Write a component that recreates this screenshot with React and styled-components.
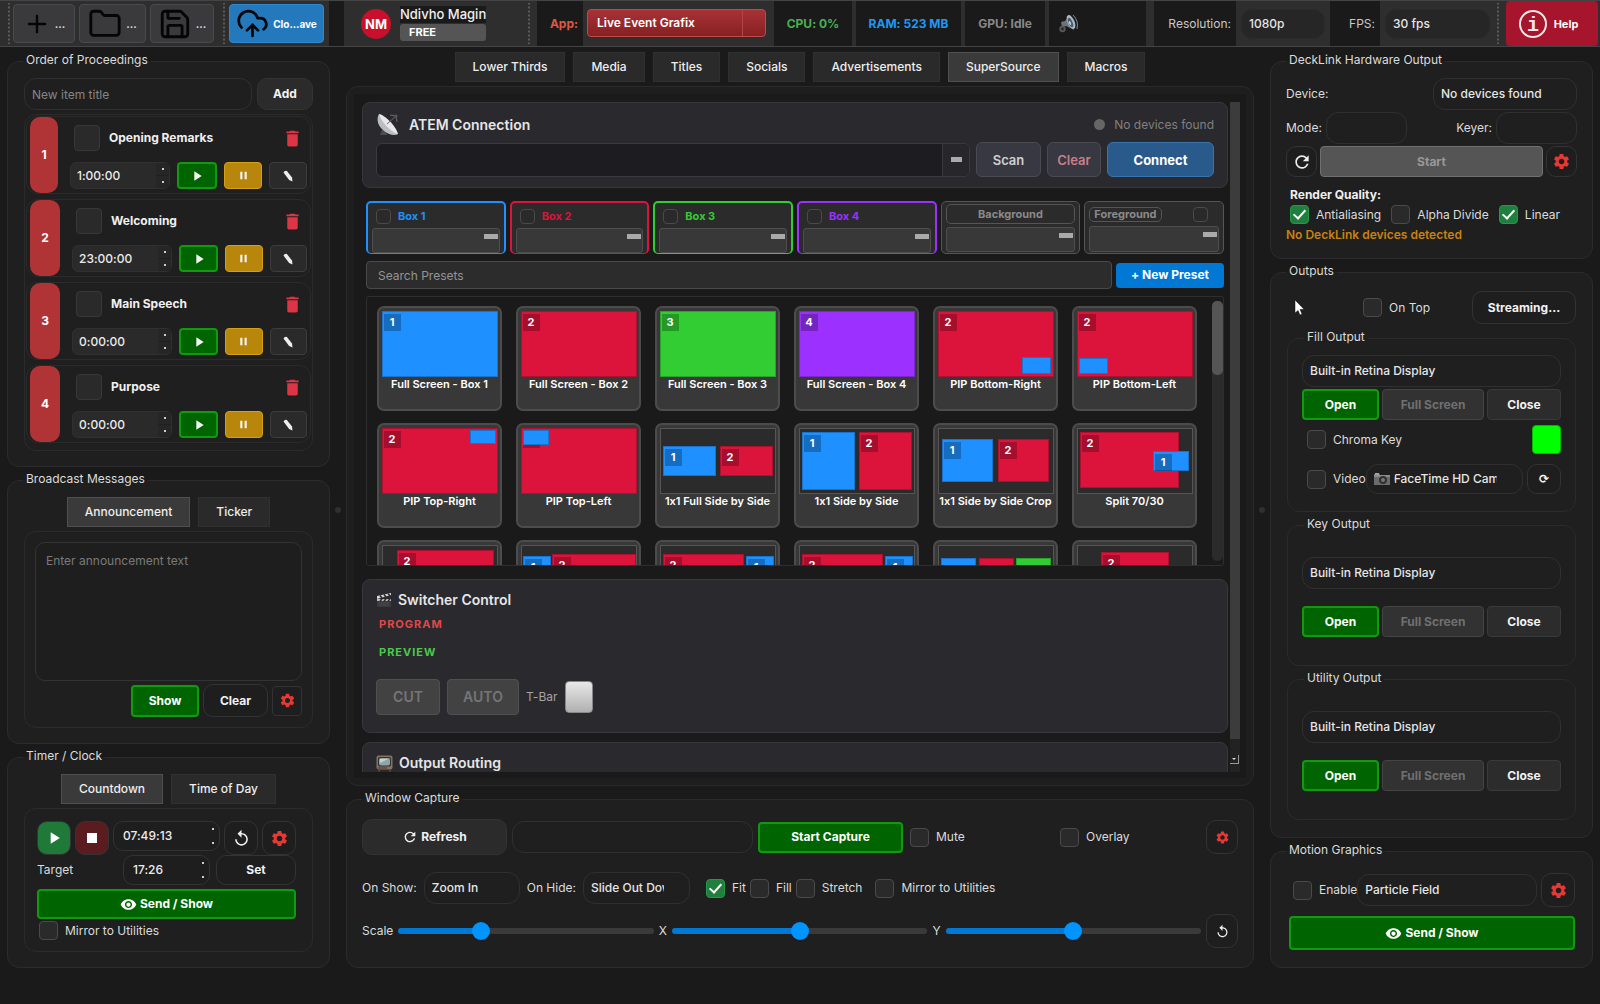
import React, { useState } from 'react';
import styled, { createGlobalStyle, css } from 'styled-components';
import { CloudUpload, Folder, Plus, Save } from 'lucide-react';
import {
    MdDelete,
    MdPause,
    MdPlayArrow,
    MdRefresh,
    MdReplay,
    MdSettings,
    MdStop,
    MdVisibility,
} from 'react-icons/md';

const BLUE = '#1e90ff';
const RED = '#dc143c';
const GREEN = '#32cd32';
const PURPLE = '#9b30ff';

const agenda = [
    { title: 'Opening Remarks', time: '1:00:00', badge: 28 },
    { title: 'Welcoming', time: '23:00:00', badge: 30 },
    { title: 'Main Speech', time: '0:00:00', badge: 30 },
    { title: 'Purpose', time: '0:00:00', badge: 30 },
];

const mainTabs = ['Lower Thirds', 'Media', 'Titles', 'Socials', 'Advertisements', 'SuperSource', 'Macros'];

const sourceBoxes = [
    { name: 'Box 1', color: BLUE },
    { name: 'Box 2', color: RED },
    { name: 'Box 3', color: GREEN },
    { name: 'Box 4', color: PURPLE },
];

// boxes: [number, colour, x, y, width, height] on a 116 x 66 canvas
const presets = [
    { name: 'Full Screen - Box 1', boxes: [[1, BLUE, 0, 0, 116, 66]] },
    { name: 'Full Screen - Box 2', boxes: [[2, RED, 0, 0, 116, 66]] },
    { name: 'Full Screen - Box 3', boxes: [[3, GREEN, 0, 0, 116, 66]] },
    { name: 'Full Screen - Box 4', boxes: [[4, PURPLE, 0, 0, 116, 66]] },
    { name: 'PIP Bottom-Right', boxes: [[2, RED, 0, 0, 116, 66], [0, BLUE, 84, 46, 29, 17]] },
    { name: 'PIP Bottom-Left', boxes: [[2, RED, 0, 0, 116, 66], [0, BLUE, 2, 47, 29, 16]] },
    { name: 'PIP Top-Right', boxes: [[2, RED, 0, 0, 116, 66], [0, BLUE, 88, 2, 26, 14]] },
    { name: 'PIP Top-Left', boxes: [[2, RED, 0, 0, 116, 66], [0, BLUE, 2, 2, 26, 15]] },
    { name: '1x1 Full Side by Side', boxes: [[1, BLUE, 3, 18, 53, 30], [2, RED, 60, 18, 53, 30]] },
    { name: '1x1 Side by Side', boxes: [[1, BLUE, 3, 4, 53, 58], [2, RED, 60, 4, 53, 58]] },
    { name: '1x1 Side by Side Crop', boxes: [[1, BLUE, 4, 11, 51, 43], [2, RED, 60, 11, 51, 43]] },
    { name: 'Split 70/30', boxes: [[2, RED, 3, 4, 99, 56], [1, BLUE, 76, 23, 36, 20]] },
    { boxes: [[2, RED, 15, 5, 97, 56]] },
    { boxes: [[1, BLUE, 2, 11, 28, 40], [2, RED, 31, 9, 84, 46]] },
    { boxes: [[2, RED, 3, 9, 81, 46], [1, BLUE, 86, 11, 28, 40]] },
    { boxes: [[2, RED, 3, 9, 81, 46], [1, BLUE, 86, 11, 28, 40]] },
    { boxes: [[0, BLUE, 3, 13, 35, 40], [0, RED, 41, 13, 35, 40], [0, GREEN, 78, 13, 35, 40]] },
    { boxes: [[2, RED, 24, 7, 68, 38], [0, BLUE, 1, 20, 22, 30]] },
];

const DishIcon = () => (
    <svg width="24" height="24" viewBox="0 0 24 24" aria-hidden="true">
        <path d="M4 22h7l-2-6-3 1z" fill="#4c4c50" />
        <path d="M3 1c-3 5-1 12 4 16 5 5 12 6 15 4z" fill="#b9bcc0" />
        <path d="M3 1c6 1 17 12 19 20C16 20 5 9 3 1z" fill="#e6e8ea" />
        <path d="M11 11l9-8M20 3l-6-1M20 3l1 6" stroke="#6c6c70" strokeWidth="1" fill="none" />
        <circle cx="20" cy="3" r="1.6" fill="#55555a" />
    </svg>
);

const ClapperIcon = () => (
    <svg width="16" height="16" viewBox="0 0 16 16" aria-hidden="true">
        <path d="M1 7h14v8H1z" fill="#3a3a3c" />
        <path d="M1 4l14-3v2L1 7z" fill="#d8d8d8" />
        <path d="M4 3.500l2 2.500M8 2.500l2 2.500M12 1.700l2 2" stroke="#2a2a2c" strokeWidth="1.600" />
        <path d="M1 7h14v2H1z" fill="#bdbdbd" />
        <path d="M4 9l2-2M8 9l2-2M12 9l2-2" stroke="#2a2a2c" strokeWidth="1.600" />
        <path d="M3 11h10M3 13h10" stroke="#58585a" strokeWidth="0.600" />
    </svg>
);

const TvIcon = () => (
    <svg width="17" height="17" viewBox="0 0 17 17" aria-hidden="true">
        <rect x="0.500" y="0.500" width="16" height="14" rx="2" fill="#8a6f5e" />
        <rect x="2" y="2" width="13" height="9.500" rx="2" fill="#2c3436" />
        <rect x="3" y="3" width="11" height="7.500" rx="2" fill="#8fa5a6" />
        <path d="M4 4h8l-8 4z" fill="#c3d2d2" />
        <path d="M2 13h9" stroke="#4d3c32" />
        <path d="M2 15h2v1.500H2zM13 15h2v1.500h-2z" fill="#5a473b" />
    </svg>
);

const SpeakerIcon = () => (
    <svg width="20" height="20" viewBox="0 0 20 20" aria-hidden="true">
        <path d="M3 8l4-1 5-6 4 15-8-4-4 1z" fill="#6f7478" />
        <ellipse cx="13" cy="8" rx="3.500" ry="7.500" transform="rotate(-24 13 8)" fill="#aeb9c0" />
        <ellipse cx="12.500" cy="8.500" rx="2" ry="5" transform="rotate(-24 12.500 8.500)" fill="#3f6075" />
        <ellipse cx="12" cy="9" rx="0.900" ry="2" transform="rotate(-24 12 9)" fill="#cfd8dc" />
        <circle cx="4.500" cy="15" r="3.200" fill="#55585c" />
        <circle cx="4.500" cy="15" r="1.400" fill="#2a2a2c" />
        <path d="M15 1q6 6 4 14" stroke="#7f8e97" fill="none" />
    </svg>
);

const CameraIcon = () => (
    <svg width="16" height="12" viewBox="0 0 16 12" aria-hidden="true">
        <path d="M0 1h6v1h10v10H0z" fill="#6b6b6b" />
        <path d="M1 0h4v2H1z" fill="#a3a3a3" />
        <path d="M0 2h16v2H0z" fill="#8d8d8d" />
        <circle cx="9" cy="7" r="4" fill="#303030" />
        <circle cx="9" cy="7" r="2" fill="#777" />
    </svg>
);

const PencilIcon = () => (
    <svg width="12" height="12" viewBox="0 0 12 12" aria-hidden="true">
        <path d="M1.500 2.400Q2.600.4 4.900 1l5.100 6.600.5 3.800-3.400-1.400z" fill="#eee" />
    </svg>
);

const InfoIcon = () => (
    <svg width="30" height="30" viewBox="0 0 30 30" aria-hidden="true">
        <circle cx="15" cy="15" r="13" fill="none" stroke="#f2e6e8" strokeWidth="2" />
        <text x="15" y="22" textAnchor="middle" fontFamily="Liberation Mono, monospace" fontSize="20" fill="#f2e6e8">i</text>
    </svg>
);

const CursorIcon = () => (
    <svg width="10" height="16" viewBox="0 0 10 16" aria-hidden="true">
        <path d="M1 0v13l3-2.500L6 15l2-1-2-4.500 4-.3z" fill="#fff" stroke="#111" strokeWidth="0.500" />
    </svg>
);

const Preview = ({ boxes }) => (
    <PreviewSvg viewBox="0 0 116 66" aria-hidden="true">
        <rect x="0.5" y="0.5" width="115" height="65" fill="#2b2b2b" stroke="#555" />
        {boxes.map(([n, color, x, y, w, h], i) => (
            <g key={i}>
                <rect x={x} y={y} width={w} height={h} fill={color} />
                <rect x={x + 0.5} y={y + 0.5} width={w - 1} height={h - 1} fill="none" stroke="#000" strokeOpacity="0.2" />
                {n ? (
                    <>
                        <rect x={x + 2} y={y + 3} width="17" height="17" fill="#000" fillOpacity="0.25" />
                        <text x={x + 10} y={y + 15} textAnchor="middle" fontSize="11" fontWeight="700" fill="#fff">{n}</text>
                    </>
                ) : null}
            </g>
        ))}
    </PreviewSvg>
);

const Check = ({ label, checked, type = 'checkbox', name }) => (
    <CheckLabel>
        <CheckBox type={type} name={name} defaultChecked={checked} />
        {label}
    </CheckLabel>
);

const Panel = ({ title, grow, inner, children }) => (
    <Fieldset $grow={grow} $inner={inner}>
        <Legend $inner={inner}>{title}</Legend>
        {children}
    </Fieldset>
);

const Spin = ({ value, label, width, grow, round }) => (
    <SpinBox $width={width} $grow={grow} $round={round}>
        <SpinInput defaultValue={value} aria-label={label} $round={round} />
        <SpinArrows $round={round} aria-hidden="true">
            <i />
            <i />
        </SpinArrows>
    </SpinBox>
);

const Slider = ({ label, initial }) => {
    const [value, setValue] = useState(initial);
    return (
        <SliderLabel>
            {label}
            <Range
                type="range"
                value={value}
                onChange={e => setValue(Number(e.target.value))}
                style={{ '--fill': `${value}%` }}
            />
        </SliderLabel>
    );
};

const TopBar = () => (
    <Toolbar>
        <Handle />
        <ToolButton $width="62px" aria-label="New"><Plus size={28} strokeWidth={2} />...</ToolButton>
        <ToolButton $width="67px" aria-label="Open"><Folder size={34} strokeWidth={2} />...</ToolButton>
        <ToolButton $width="64px" aria-label="Save"><Save size={34} strokeWidth={2} />...</ToolButton>
        <Handle $width="11px" />
        <CloudButton><CloudUpload size={33} strokeWidth={2} />Clo...ave</CloudButton>
        <DarkCell $width="15px" $left="5px" />
        <User>
            <Avatar>NM</Avatar>
            <UserText>
                <UserName>Ndivho Magin</UserName>
                <Plan>FREE</Plan>
            </UserText>
        </User>
        <Handle $width="16px" />
        <DarkCell $width="46px" $color="#e05545" $end><label htmlFor="app">App:</label></DarkCell>
        <AppSelect id="app"><option>Live Event Grafix</option></AppSelect>
        <DarkCell $width="78px" $color="#4caf50">CPU: 0%</DarkCell>
        <DarkCell $width="105px" $left="4px" $color="#2196f3">RAM: 523 MB</DarkCell>
        <DarkCell $width="80px" $left="4px" $color="#888">GPU: Idle</DarkCell>
        <VolumeCell><SpeakerIcon /></VolumeCell>
        <DarkCell $width="82px" $left="8px" $light $end><label htmlFor="resolution">Resolution:</label></DarkCell>
        <BarSelect id="resolution" $width="84px" $after="5px"><option>1080p</option></BarSelect>
        <DarkCell $width="50px" $light $end><label htmlFor="fps">FPS:</label></DarkCell>
        <BarSelect id="fps" $width="105px" $after="0"><option>30 fps</option></BarSelect>
        <Handle $width="16px" />
        <HelpButton><InfoIcon />Help</HelpButton>
    </Toolbar>
);

const Proceedings = () => (
    <Panel title="Order of Proceedings" grow>
        <Row $gap="5px">
            <TextInput placeholder="New item title" aria-label="New item title" />
            <Button $width="56px" $raised>Add</Button>
        </Row>
        <AgendaList>
            {agenda.map((item, i) => (
                <AgendaItem key={item.title}>
                    <AgendaBadge $width={item.badge}>{i + 1}</AgendaBadge>
                    <AgendaBody>
                        <AgendaTop>
                            <BigCheck type="checkbox" aria-label={`${item.title} done`} />
                            <AgendaTitle>{item.title}</AgendaTitle>
                            <TrashButton aria-label={`Delete ${item.title}`}><MdDelete size={21} /></TrashButton>
                        </AgendaTop>
                        <Row $gap="7px">
                            <Spin value={item.time} label={`${item.title} time`} width="100px" />
                            <MiniButton $kind="play" aria-label="Play"><MdPlayArrow size={16} /></MiniButton>
                            <MiniButton $kind="pause" aria-label="Pause"><MdPause size={13} /></MiniButton>
                            <MiniButton aria-label="Edit"><PencilIcon /></MiniButton>
                        </Row>
                    </AgendaBody>
                </AgendaItem>
            ))}
        </AgendaList>
    </Panel>
);

const Messages = () => (
    <Panel title="Broadcast Messages">
        <Tabs>
            <Tab $active>Announcement</Tab>
            <Tab>Ticker</Tab>
        </Tabs>
        <TabBody>
            <Message placeholder="Enter announcement text" aria-label="Announcement" />
            <MessageActions>
                <GreenButton $width="68px" $height="32px">Show</GreenButton>
                <Button $width="65px" $height="33px">Clear</Button>
                <IconButton $size="30px" $square aria-label="Message settings"><MdSettings size={17} /></IconButton>
            </MessageActions>
        </TabBody>
    </Panel>
);

const Timer = () => (
    <Panel title="Timer / Clock">
        <Tabs>
            <Tab $active>Countdown</Tab>
            <Tab>Time of Day</Tab>
        </Tabs>
        <TimerBody>
            <Row $gap="4px" $top>
                <IconButton $size="34px" $bg="#1f7a3a" $color="#fff" aria-label="Start"><MdPlayArrow size={20} /></IconButton>
                <IconButton $size="34px" $bg="#5a1c1e" $color="#fff" aria-label="Stop"><MdStop size={20} /></IconButton>
                <Spin value="07:49:13" label="Duration" grow round />
                <IconButton $size="34px" $color="#eee" aria-label="Reset"><MdReplay size={19} /></IconButton>
                <IconButton $size="34px" aria-label="Timer settings"><MdSettings size={19} /></IconButton>
            </Row>
            <Row $gap="6px">
                <Grow>Target</Grow>
                <Spin value="17:26" label="Target" width="87px" round />
                <Button $width="80px" $height="30px">Set</Button>
            </Row>
            <SendButton $height="30px"><MdVisibility size={17} />Send / Show</SendButton>
            <Indent><Check label="Mirror to Utilities" /></Indent>
        </TimerBody>
    </Panel>
);

const SuperSource = () => (
    <Pane>
        <PaneInner>
            <Scroller>
                <Card>
                    <CardHead>
                        <DishIcon />
                        <CardTitle>ATEM Connection</CardTitle>
                        <Status><StatusDot />No devices found</Status>
                    </CardHead>
                    <Row $gap="6px">
                        <AtemCombo>
                            <AtemInput aria-label="ATEM address" />
                            <AtemArrow aria-label="Show devices"><Dash $width="11px" /></AtemArrow>
                        </AtemCombo>
                        <CardButton $width="65px">Scan</CardButton>
                        <CardButton $width="54px" $color="#c97f88">Clear</CardButton>
                        <CardButton $width="107px" $primary>Connect</CardButton>
                    </Row>
                </Card>
                <SourceSection>
                    <SourceRow>
                        {sourceBoxes.map(box => (
                            <SourceBox key={box.name} $color={box.color}>
                                <SourceHead $color={box.color}>
                                    <CheckBox type="checkbox" $small />
                                    {box.name}
                                </SourceHead>
                                <SourcePick aria-label={`${box.name} source`}><Dash $width="14px" /></SourcePick>
                            </SourceBox>
                        ))}
                        <LayerBox>
                            <LayerName $wide>Background</LayerName>
                            <SourcePick aria-label="Background source"><Dash $width="14px" /></SourcePick>
                        </LayerBox>
                        <LayerBox>
                            <LayerHead>
                                <LayerName>Foreground</LayerName>
                                <CheckBox type="checkbox" aria-label="Foreground" $small />
                            </LayerHead>
                            <SourcePick aria-label="Foreground source"><Dash $width="14px" /></SourcePick>
                        </LayerBox>
                    </SourceRow>
                    <Row $gap="4px">
                        <SearchInput placeholder="Search Presets" aria-label="Search presets" />
                        <PresetButton>+ New Preset</PresetButton>
                    </Row>
                    <PresetFrame>
                        <PresetGrid>
                            {presets.map((preset, i) => (
                                <Preset key={i}>
                                    <Preview boxes={preset.boxes} />
                                    {preset.name}
                                </Preset>
                            ))}
                        </PresetGrid>
                        <PresetTrack><PresetThumb /></PresetTrack>
                    </PresetFrame>
                </SourceSection>
                <Card>
                    <CardHead $tight>
                        <ClapperIcon />
                        <CardTitle>Switcher Control</CardTitle>
                    </CardHead>
                    <BusLabel $color="#e04848">PROGRAM</BusLabel>
                    <BusLabel $color="#4bc94b">PREVIEW</BusLabel>
                    <Transition>
                        <TransitionButton $width="64px" disabled>CUT</TransitionButton>
                        <TransitionButton $width="72px" disabled>AUTO</TransitionButton>
                        T-Bar
                        <TBar aria-label="T-Bar" />
                    </Transition>
                </Card>
                <Card>
                    <CardHead $tight>
                        <TvIcon />
                        <CardTitle>Output Routing</CardTitle>
                    </CardHead>
                </Card>
            </Scroller>
            <ScrollTrack>
                <ScrollThumb />
                <ScrollEnd />
            </ScrollTrack>
        </PaneInner>
    </Pane>
);

const Capture = () => (
    <Panel title="Window Capture">
        <CaptureBody>
            <Row $gap="5px">
                <Button $width="145px" $height="36px" $raised><MdRefresh size={16} />Refresh</Button>
                <CaptureSelect aria-label="Window" />
                <GreenButton $width="145px" $height="31px">Start Capture</GreenButton>
                <Wide $width="145px"><Check label="Mute" /></Wide>
                <Wide $width="143px"><Check label="Overlay" /></Wide>
                <IconButton $size="32px" $tall aria-label="Capture settings"><MdSettings size={15} /></IconButton>
            </Row>
            <Row $gap="7px">
                <label htmlFor="on-show">On Show:</label>
                <Select id="on-show" $width="96px"><option>Zoom In</option></Select>
                <label htmlFor="on-hide">On Hide:</label>
                <Select id="on-hide" $width="107px" $right="25px"><option>Slide Out Down</option></Select>
                <FitChoices>
                    <Check label="Fit" type="radio" name="fit" checked />
                    <Check label="Fill" type="radio" name="fit" />
                    <Check label="Stretch" type="radio" name="fit" />
                </FitChoices>
                <Check label="Mirror to Utilities" />
            </Row>
            <Row $gap="5px">
                <Slider label="Scale" initial={31} />
                <Slider label="X" initial={50} />
                <Slider label="Y" initial={50} />
                <IconButton $size="32px" $tall $color="#eee" aria-label="Reset transform"><MdReplay size={15} /></IconButton>
            </Row>
        </CaptureBody>
    </Panel>
);

const DeckLink = () => (
    <Panel title="DeckLink Hardware Output">
        <DeckBody>
            <Row>
                <Grow as="label" htmlFor="device">Device:</Grow>
                <Select id="device" $width="144px"><option>No devices found</option></Select>
            </Row>
            <Row $gap="4px">
                <label htmlFor="mode">Mode:</label>
                <Select id="mode" $width="81px" />
                <Grow />
                <label htmlFor="keyer">Keyer:</label>
                <Select id="keyer" $width="81px" />
            </Row>
            <Row $gap="3px">
                <IconButton $size="31px" $color="#eee" aria-label="Rescan"><MdRefresh size={20} /></IconButton>
                <StartButton disabled>Start</StartButton>
                <IconButton $size="31px" aria-label="DeckLink settings"><MdSettings size={19} /></IconButton>
            </Row>
            <Quality>Render Quality:</Quality>
            <QualityRow>
                <Check label="Antialiasing" checked />
                <Check label="Alpha Divide" />
                <Check label="Linear" checked />
            </QualityRow>
            <Warning>No DeckLink devices detected</Warning>
        </DeckBody>
    </Panel>
);

const OutputButtons = () => (
    <OutputGrid>
        <GreenButton>Open</GreenButton>
        <FlatButton disabled>Full Screen</FlatButton>
        <FlatButton>Close</FlatButton>
    </OutputGrid>
);

const Outputs = () => (
    <Panel title="Outputs" grow>
        <OutputsHead>
            <CursorIcon />
            <Check label="On Top" />
            <Button $width="104px" $height="33px">Streaming...</Button>
        </OutputsHead>
        <OutputStack>
            <Panel title="Fill Output" inner>
                <Select aria-label="Fill display" $width="100%"><option>Built-in Retina Display</option></Select>
                <OutputButtons />
                <ChromaRow>
                    <Check label="Chroma Key" />
                    <Swatch aria-label="Chroma colour" />
                </ChromaRow>
                <VideoRow>
                    <Check label="Video" />
                    <DeviceCombo>
                        <CameraIcon />
                        <DeviceSelect aria-label="Video device"><option>FaceTime HD Camera</option></DeviceSelect>
                    </DeviceCombo>
                    <ReloadButton aria-label="Reload devices">⟳</ReloadButton>
                </VideoRow>
            </Panel>
            <Panel title="Key Output" inner>
                <Spaced>
                    <Select aria-label="Key display" $width="100%"><option>Built-in Retina Display</option></Select>
                    <OutputButtons />
                </Spaced>
            </Panel>
            <Panel title="Utility Output" inner>
                <Spaced>
                    <Select aria-label="Utility display" $width="100%"><option>Built-in Retina Display</option></Select>
                    <OutputButtons />
                </Spaced>
            </Panel>
        </OutputStack>
    </Panel>
);

const Motion = () => (
    <Panel title="Motion Graphics">
        <MotionBody>
            <MotionRow>
                <Check label="Enable" />
                <Select aria-label="Motion style" $width="100%"><option>Particle Field</option></Select>
                <IconButton $size="34px" aria-label="Motion settings"><MdSettings size={19} /></IconButton>
            </MotionRow>
            <SendButton $height="34px"><MdVisibility size={17} />Send / Show</SendButton>
        </MotionBody>
    </Panel>
);

const App = () => (
    <>
        <GlobalStyle />
        <Shell>
            <TopBar />
            <Main>
                <Column>
                    <Proceedings />
                    <Messages />
                    <Timer />
                </Column>
                <Splitter />
                <Column>
                    <Tabs>
                        {mainTabs.map(tab => <Tab key={tab} $active={tab === 'SuperSource'}>{tab}</Tab>)}
                    </Tabs>
                    <SuperSource />
                    <Capture />
                </Column>
                <Splitter />
                <Column>
                    <DeckLink />
                    <Outputs />
                    <Motion />
                </Column>
            </Main>
        </Shell>
    </>
);

export default App;

const GlobalStyle = createGlobalStyle`
    * {
        box-sizing: border-box;
    }
    body {
        margin: 0;
        background: #1a1a1a;
        color: #dcdcdc;
        font-family: Inter, "Liberation Sans", sans-serif;
        font-size: 12px;
        line-height: 16px;
        font-variant-ligatures: no-contextual;
    }
    button, input, select, textarea {
        font: inherit;
        font-variant-ligatures: no-contextual;
        color: inherit;
        margin: 0;
    }
    svg {
        flex-shrink: 0;
    }
`

const Shell = styled.div`
    height: 100vh;
    display: flex;
    flex-direction: column;
`

const Main = styled.main`
    flex: 1;
    min-height: 0;
    display: grid;
    grid-template-columns: 323px 16px minmax(0, 1fr) 16px 323px;
    padding: 5px 7px 36px;
`

const Column = styled.div`
    display: flex;
    flex-direction: column;
    gap: 4px;
    min-height: 0;
`

const Splitter = styled.div`
    align-self: center;
    justify-self: center;
    width: 6px;
    height: 6px;
    border-radius: 50%;
    background: #303030;
`

const Row = styled.div`
    display: flex;
    align-items: ${props => props.$top ? 'flex-start' : 'center'};
    gap: ${props => props.$gap || '0'};
`

const Grow = styled.span`
    flex: 1;
`

const Indent = styled.div`
    padding-left: 2px;
`

const Wide = styled.div`
    width: ${props => props.$width};
    padding-left: 2px;
`

const Fieldset = styled.fieldset`
    margin: 0;
    min-width: 0;
    border: 1px solid #2b2b2b;
    border-radius: 12px;
    background: #1f1f1f;
    padding: ${props => props.$inner ? '8px 14px 17px' : '8px 16px 15px'};
    flex: ${props => props.$grow ? '1' : 'none'};
`

const Legend = styled.legend`
    line-height: 16px;
    padding: 0 3px 2px;
    margin-left: ${props => props.$inner ? '2px' : '-1px'};
`

const Toolbar = styled.header`
    display: flex;
    align-items: center;
    height: 47px;
    border-top: 1px solid #444;
    border-bottom: 1px solid #444;
    background: #2e2e2e;
    padding: 0 2px 0 4px;
    flex-shrink: 0;
`

const Handle = styled.span`
    width: ${props => props.$width || '9px'};
    height: 41px;
    background: radial-gradient(#5a5a5a 1px, transparent 1px) center / 4px 4px repeat-y;
    flex-shrink: 0;
`

const ToolButton = styled.button`
    width: ${props => props.$width};
    height: 39px;
    margin-right: 4px;
    display: flex;
    align-items: center;
    justify-content: center;
    gap: 4px;
    padding: 0;
    background: #3a3a3d;
    border: 1px solid #4a4a4d;
    border-radius: 4px;
    font-size: 11px;
    font-weight: 600;
    flex-shrink: 0;

    svg {
        color: #050505;
    }
`

const CloudButton = styled(ToolButton)`
    width: 95px;
    margin: 0;
    color: #fff;
    background: #2479bd;
    border-color: #2d88d0;
    font-size: 10px;
    font-weight: 700;
`

const DarkCell = styled.div`
    display: flex;
    align-items: center;
    justify-content: ${props => props.$end ? 'flex-end' : 'center'};
    align-self: stretch;
    flex-shrink: 0;
    width: ${props => props.$width};
    margin-left: ${props => props.$left || '0'};
    padding-right: ${props => props.$end ? '5px' : '0'};
    background: #1a1a1a;
    color: ${props => props.$color || '#c8c8c8'};
    font-weight: ${props => props.$light ? '400' : '700'};
`

const VolumeCell = styled(DarkCell)`
    flex: 1;
    justify-content: flex-start;
    margin-left: 4px;
    padding-left: 9px;
`

const User = styled.div`
    flex: 0 0 177px;
    display: flex;
    align-items: center;
    gap: 9px;
    padding-left: 17px;
`

const Avatar = styled.div`
    width: 30px;
    height: 30px;
    border-radius: 50%;
    background: #c8102e;
    color: #fff;
    font-size: 13px;
    font-weight: 700;
    display: flex;
    align-items: center;
    justify-content: center;
`

const UserText = styled.div`
    display: flex;
    flex-direction: column;
    gap: 1px;
`

const UserName = styled.div`
    background: #1a1a1a;
    color: #f0f0f0;
    font-size: 13px;
    font-weight: 500;
    line-height: 17px;
    white-space: nowrap;
`

const Plan = styled.div`
    background: #555;
    border-radius: 3px;
    color: #fff;
    font-size: 11px;
    font-weight: 700;
    line-height: 17px;
    padding-left: 9px;
`

const AppSelect = styled.select`
    appearance: none;
    width: 179px;
    height: 28px;
    margin: 0 8px 1px 4px;
    padding: 0 9px;
    color: #fff;
    font-weight: 600;
    border: 1px solid #c04a4a;
    border-radius: 4px;
    flex-shrink: 0;
    background:
        linear-gradient(#b54545, #b54545) right 22px top 0 / 1px 100% no-repeat,
        linear-gradient(#a83236, #872022);
`

const selectBox = css`
    appearance: none;
    min-width: 0;
    background: #1f1f1f;
    border: 1px solid #303030;
    border-radius: 12px;
    color: #e6e6e6;
    padding: 0 7px;
    outline: none;
`

const Select = styled.select`
    ${selectBox}
    width: ${props => props.$width};
    height: 32px;
    padding-right: ${props => props.$right || '7px'};
    font-weight: 500;
`

const BarSelect = styled(Select)`
    height: 30px;
    margin: 0 ${props => props.$after} 0 5px;
    background: #262626;
    border-color: #2a2a2a;
    flex-shrink: 0;
`

const CaptureSelect = styled.select`
    ${selectBox}
    flex: 1;
    height: 32px;
`

const HelpButton = styled.button`
    width: 92px;
    height: 45px;
    display: flex;
    align-items: center;
    justify-content: center;
    gap: 6px;
    padding: 0 8px 0 0;
    border: 0;
    border-radius: 4px;
    background: #a6152b;
    color: #fff;
    font-size: 11px;
    font-weight: 700;
    flex-shrink: 0;
`

const TextInput = styled.input`
    ${selectBox}
    flex: 1;
    height: 32px;

    &::placeholder {
        color: #858585;
    }
`

const Button = styled.button`
    display: flex;
    align-items: center;
    justify-content: center;
    gap: 3px;
    padding: 0;
    width: ${props => props.$width};
    height: ${props => props.$height || '32px'};
    border: 1px solid #333;
    border-radius: 10px;
    background: ${props => props.$raised ? '#2b2b2b' : '#1e1e1e'};
    color: #f2f2f2;
    font-weight: 700;
`

const GreenButton = styled(Button)`
    background: #006400;
    border: 2px solid #0f9a0f;
    border-radius: 4px;
    color: #fff;
    height: ${props => props.$height || '31px'};
`

const SendButton = styled(GreenButton)`
    width: 100%;
`

const FlatButton = styled(Button)`
    height: 31px;
    background: #2c2c2c;
    border: 1px solid #3a3a3a;
    border-radius: 4px;

    &:disabled {
        background: #323232;
        border-color: #444;
        color: #707070;
    }
`

const StartButton = styled(Button)`
    flex: 1;
    height: 31px;
    background: #555;
    border-color: #707070;
    border-radius: 4px;
    color: #999;
`

const IconButton = styled.button`
    display: flex;
    align-items: center;
    justify-content: center;
    padding: 0;
    width: ${props => props.$size};
    height: ${props => props.$tall ? '34px' : props.$size};
    border: 1px solid #333;
    border-radius: ${props => props.$square ? '4px' : '10px'};
    background: ${props => props.$bg || '#1e1e1e'};
    color: ${props => props.$color || '#e53935'};
    flex-shrink: 0;
`

const CheckLabel = styled.label`
    display: flex;
    align-items: center;
    gap: 7px;
    white-space: nowrap;
`

const CheckBox = styled.input`
    appearance: none;
    width: ${props => props.$small ? '15px' : '19px'};
    height: ${props => props.$small ? '15px' : '19px'};
    border: 1px solid #4a4a4a;
    border-radius: 4px;
    background: #2a2a2a;
    display: grid;
    place-items: center;
    flex-shrink: 0;

    &:checked {
        background: #1f7f3c;
        border-color: #25994a;
    }
    &:checked::after {
        content: '';
        width: 5px;
        height: 10px;
        margin-bottom: 3px;
        border: solid #fff;
        border-width: 0 2px 2px 0;
        transform: rotate(42deg);
    }
`

const AgendaList = styled.div`
    display: flex;
    flex-direction: column;
    gap: 5px;
    margin-top: 4px;
    padding: 1px 1px 7px;
    border: 1px solid #2b2b2b;
    border-radius: 12px;
`

const AgendaItem = styled.div`
    display: flex;
    gap: 12px;
    height: 78px;
    padding: 0 3px;
    border: 1px solid #2b2b2b;
    border-radius: 12px;
`

const AgendaBadge = styled.div`
    width: ${props => props.$width}px;
    border-radius: 10px;
    background: #b03435;
    color: #fff;
    font-weight: 700;
    display: flex;
    align-items: center;
    justify-content: center;
    flex-shrink: 0;
`

const AgendaBody = styled.div`
    flex: 1;
    min-width: 0;
    display: flex;
    flex-direction: column;
    justify-content: space-between;
    padding: 8px 0 4px;
`

const AgendaTop = styled.div`
    display: flex;
    align-items: center;
    gap: 9px;
    padding: 0 4px;
`

const BigCheck = styled(CheckBox)`
    width: 26px;
    height: 26px;
    border-color: #383838;
`

const AgendaTitle = styled.div`
    flex: 1;
    color: #f0f0f0;
    font-weight: 700;
`

const TrashButton = styled.button`
    display: flex;
    padding: 0;
    border: 0;
    background: none;
    color: #dc3545;
`

const miniKinds = {
    play: css`
        background: #006400;
        border: 2px solid #0f9a0f;
    `,
    pause: css`
        background: #b8860b;
        border: 1px solid #d4a017;
    `,
}

const MiniButton = styled.button`
    flex: 1;
    height: 27px;
    display: flex;
    align-items: center;
    justify-content: center;
    padding: 0;
    color: #f4f4f4;
    background: #2a2a2a;
    border: 1px solid #3c3c3c;
    border-radius: 4px;
    ${props => miniKinds[props.$kind]}
`

const SpinBox = styled.div`
    display: flex;
    width: ${props => props.$width};
    flex: ${props => props.$grow ? '1' : 'none'};
    height: ${props => props.$round ? '30px' : '27px'};
    border: 1px solid ${props => props.$round ? '#333' : '#303030'};
    border-radius: ${props => props.$round ? '10px' : '6px'};
    background: ${props => props.$round ? '#1e1e1e' : '#2a2a2a'};
    overflow: hidden;
`

const SpinInput = styled.input`
    flex: 1;
    min-width: 0;
    border: 0;
    background: none;
    outline: none;
    color: #ececec;
    font-weight: 500;
    padding: 0 0 0 ${props => props.$round ? '9px' : '6px'};
`

const SpinArrows = styled.div`
    width: 13px;
    display: grid;
    grid-template-rows: 1fr 1fr;
    gap: 1px;
    background: ${props => props.$round ? 'none' : '#1f1f1f'};

    i {
        display: grid;
        place-items: center;
        background: ${props => props.$round ? 'none' : '#262626'};
    }
    i::after {
        content: '';
        width: 2px;
        height: 2px;
        background: #ccc;
    }
`

const Tabs = styled.div`
    display: flex;
    justify-content: center;
    gap: 8px;
`

const Tab = styled.button`
    height: 30px;
    padding: 0 17px;
    border: 1px solid ${props => props.$active ? '#505050' : '#303030'};
    background: ${props => props.$active ? '#3a3a3a' : '#2a2a2a'};
    color: #eee;
    font-weight: 500;
`

const TabBody = styled.div`
    display: flex;
    flex-direction: column;
    gap: 3px;
    margin-top: 4px;
    padding: 10px;
    border: 1px solid #2b2b2b;
    border-radius: 12px;
`

const TimerBody = styled(TabBody)`
    gap: 0;
    padding: 12px 16px 11px 12px;

    ${SendButton} {
        margin: 4px 0 2px;
    }
`

const Message = styled.textarea`
    height: 139px;
    resize: none;
    outline: none;
    padding: 10px;
    border: 1px solid #333;
    border-radius: 10px;
    background: #1e1e1e;

    &::placeholder {
        color: #7a7a7a;
    }
`

const MessageActions = styled.div`
    display: flex;
    align-items: center;
    justify-content: flex-end;
    gap: 4px;
`

const Pane = styled.section`
    flex: 1;
    min-height: 0;
    display: flex;
    padding: 7px;
    border: 1px solid #2a2a2a;
    border-radius: 12px;
    background: #1e1e1e;
`

const PaneInner = styled.div`
    flex: 1;
    min-width: 0;
    display: flex;
    gap: 2px;
    padding: 8px 6px 6px 8px;
    background: #1a1a1a;
`

const Scroller = styled.div`
    flex: 1;
    min-width: 0;
    overflow: hidden;
    display: flex;
    flex-direction: column;
    gap: 9px;
`

const ScrollTrack = styled.div`
    width: 10px;
    display: flex;
    flex-direction: column;
    justify-content: space-between;
    background: #222;
`

const ScrollThumb = styled.div`
    height: 95%;
    background: #3c3c3c;
`

const ScrollEnd = styled.div`
    width: 9px;
    height: 9px;
    margin-bottom: 8px;
    border: solid #999;
    border-width: 0 1px 1px 0;
    display: grid;
    place-items: center;

    &::after {
        content: '';
        border: 2px solid transparent;
        border-top-color: #ddd;
        border-bottom: 0;
    }
`

const Card = styled.section`
    flex-shrink: 0;
    padding: 10px 13px;
    border: 1px solid #38383c;
    border-radius: 8px;
    background: #29292e;
`

const CardHead = styled.div`
    display: flex;
    align-items: center;
    gap: ${props => props.$tight ? '6px' : '9px'};
    height: ${props => props.$tight ? '20px' : '23px'};
    margin-bottom: 6px;
`

const CardTitle = styled.h2`
    margin: 0;
    flex: 1;
    color: #e6e6e6;
    font-size: 14px;
    font-weight: 600;
`

const Status = styled.div`
    display: flex;
    align-items: center;
    gap: 9px;
    color: #808080;
`

const StatusDot = styled.span`
    width: 11px;
    height: 11px;
    border-radius: 50%;
    background: #666;
`

const AtemCombo = styled.div`
    flex: 1;
    display: flex;
    height: 34px;
    border: 1px solid #3a3a3e;
    border-radius: 6px;
    background: #1d1d21;
    overflow: hidden;
`

const AtemInput = styled.input`
    flex: 1;
    min-width: 0;
    border: 0;
    outline: none;
    padding: 0 8px;
    background: none;
`

const AtemArrow = styled.button`
    width: 27px;
    padding: 0;
    border: 0;
    border-left: 1px solid #3a3a3e;
    background: #27272b;
    display: grid;
    place-items: center;
`

const Dash = styled.span`
    display: block;
    width: ${props => props.$width};
    height: 5px;
    background: #aaa;
`

const CardButton = styled.button`
    width: ${props => props.$width};
    height: 35px;
    padding: 0;
    border: 1px solid ${props => props.$primary ? '#3a74ad' : '#4a4a52'};
    border-radius: 6px;
    background: ${props => props.$primary ? '#2a5a8c' : '#383842'};
    color: ${props => props.$primary ? '#fff' : props.$color || '#d0d0d0'};
    font-size: 13px;
    font-weight: ${props => props.$primary ? '700' : '600'};
`

const SourceSection = styled.div`
    flex-shrink: 0;
    display: flex;
    flex-direction: column;
    gap: 7px;
    margin: 4px 0;
    padding: 0 4px;
`

const SourceRow = styled.div`
    display: grid;
    grid-template-columns: repeat(6, 1fr);
    gap: 4px;
    height: 53px;
`

const SourceBox = styled.div`
    display: flex;
    flex-direction: column;
    min-height: 0;
    overflow: hidden;
    padding: 5px 4px 0;
    gap: 4px;
    border: 2px solid ${props => props.$color};
    border-bottom-width: 1px;
    border-radius: 5px;
    background: #2b2b2b;
`

const SourceHead = styled.label`
    display: flex;
    align-items: center;
    gap: 7px;
    padding-left: 4px;
    color: ${props => props.$color};
    font-size: 11px;
    font-weight: 700;
`

const SourcePick = styled.button`
    display: flex;
    justify-content: flex-end;
    align-items: flex-start;
    flex: 1 0 25px;
    padding: 5px 1px;
    border: 1px solid #4e4e4e;
    border-radius: 3px;
    background: #383838;
`

const LayerBox = styled.div`
    display: flex;
    flex-direction: column;
    gap: 3px;
    overflow: hidden;
    padding: 2px 4px 1px;
    border: 1px solid #555;
    border-radius: 5px;
    background: #2b2b2b;
`

const LayerHead = styled.div`
    display: flex;
    align-items: center;
    justify-content: space-between;
    padding: 3px 11px 1px 0;
`

const LayerName = styled.div`
    padding: ${props => props.$wide ? '2px 0' : '0 4px'};
    border: 1px solid #555;
    border-radius: 5px;
    color: #8a8a8a;
    font-size: 11px;
    font-weight: 700;
    line-height: ${props => props.$wide ? '14px' : '13px'};
    text-align: center;
`

const SearchInput = styled.input`
    flex: 1;
    height: 28px;
    padding: 0 11px;
    border: 1px solid #4a4a4a;
    border-radius: 4px;
    background: #2c2c2c;
    outline: none;

    &::placeholder {
        color: #949494;
    }
`

const PresetButton = styled.button`
    width: 108px;
    height: 25px;
    padding: 0;
    border: 0;
    border-radius: 4px;
    background: #0078d4;
    color: #fff;
    font-weight: 700;
`

const PresetFrame = styled.div`
    display: flex;
    justify-content: space-between;
    height: 270px;
    padding: 4px 0 4px 10px;
    border: 1px solid #2e2e2e;
    border-radius: 3px;
    overflow: hidden;
`

const PresetGrid = styled.div`
    display: grid;
    grid-template-columns: repeat(auto-fill, 125px);
    grid-auto-rows: 105px;
    gap: 12px 14px;
    flex: 1;
    height: 264px;
    padding-top: 5px;
    overflow: hidden;
`

const Preset = styled.button`
    display: flex;
    flex-direction: column;
    align-items: center;
    padding: 3px 0 0;
    border: 2px solid #4c4c4c;
    border-radius: 7px;
    background: #383838;
    color: #fff;
    font-size: 11px;
    font-weight: 600;
    line-height: 14px;
    white-space: nowrap;
`

const PreviewSvg = styled.svg`
    width: 116px;
    height: 66px;
`

const PresetTrack = styled.div`
    width: 11px;
    border-radius: 5px;
    background: #2b2b2b;
`

const PresetThumb = styled.div`
    height: 74px;
    border-radius: 5px;
    background: #555;
`

const BusLabel = styled.div`
    padding-left: 3px;
    margin-bottom: 12px;
    color: ${props => props.$color};
    font-size: 11px;
    font-weight: 700;
    letter-spacing: 1px;
`

const Transition = styled.div`
    display: flex;
    align-items: center;
    gap: 7px;
    height: 50px;
    color: #a4a4a4;
`

const TransitionButton = styled.button`
    width: ${props => props.$width};
    height: 36px;
    padding: 0;
    border: 1px solid #505050;
    border-radius: 4px;
    background: #424242;
    color: #757575;
    font-size: 14px;
    font-weight: 600;
`

const TBar = styled.button`
    width: 28px;
    height: 32px;
    padding: 0;
    border: 1px solid #888;
    border-radius: 4px;
    background: linear-gradient(#e8e8e8, #b0b0b0);
`

const CaptureBody = styled.div`
    display: flex;
    flex-direction: column;
    gap: 10px;
    margin: 0 -1px;
    padding: 3px 0 4px;

    & > ${Row}:first-child {
        margin-bottom: 7px;
    }
`

const FitChoices = styled.div`
    display: flex;
    gap: 4px;
    padding: 0 6px 0 9px;
`

const SliderLabel = styled.label`
    flex: 1 1 auto;
    display: flex;
    align-items: center;
    gap: 5px;
`

const Range = styled.input`
    appearance: none;
    flex: 1;
    min-width: 0;
    height: 18px;
    background: none;

    &::-webkit-slider-runnable-track {
        height: 6px;
        border-radius: 3px;
        background: linear-gradient(to right, #0078d4 var(--fill), #3a3a3a var(--fill));
    }
    &::-webkit-slider-thumb {
        appearance: none;
        width: 18px;
        height: 18px;
        margin-top: -6px;
        border-radius: 50%;
        background: #0094ff;
    }
`

const DeckBody = styled.div`
    display: flex;
    flex-direction: column;
    gap: 2px;
    margin: 0 -1px;
`

const Quality = styled.div`
    padding: 8px 4px 0;
    color: #f0f0f0;
    font-weight: 700;
`

const QualityRow = styled.div`
    display: flex;
    justify-content: space-between;
    padding: 0 17px 1px 4px;
`

const Warning = styled.div`
    color: #c9820f;
    font-weight: 600;
`

const OutputsHead = styled.div`
    display: flex;
    align-items: center;
    padding: 2px 0 5px 7px;

    ${CheckLabel} {
        flex: 1;
        padding-left: 59px;
    }
`

const OutputStack = styled.div`
    display: flex;
    flex-direction: column;
    gap: 4px;
`

const OutputGrid = styled.div`
    display: grid;
    grid-template-columns: 77px 102px 1fr;
    gap: 3px;
    margin-top: 2px;

    button {
        width: 100%;
    }
`

const ChromaRow = styled.div`
    display: flex;
    align-items: center;
    justify-content: space-between;
    margin: 5px 0 10px;
    padding-left: 5px;
`

const Swatch = styled.button`
    width: 29px;
    height: 29px;
    padding: 0;
    border: 1px solid #00b800;
    border-radius: 4px;
    background: #00ff00;
`

const VideoRow = styled.div`
    display: flex;
    align-items: center;
    padding-left: 5px;
`

const DeviceCombo = styled.div`
    flex: 1;
    min-width: 0;
    height: 30px;
    display: flex;
    align-items: center;
    gap: 4px;
    padding: 0 25px 0 7px;
    margin-right: 4px;
    border: 1px solid #303030;
    border-radius: 12px;
`

const DeviceSelect = styled.select`
    ${selectBox}
    flex: 1;
    border: 0;
    padding: 0;
    background: none;
    font-weight: 500;
`

const ReloadButton = styled(Button)`
    width: 34px;
    height: 30px;
    font-family: "DejaVu Sans", sans-serif;
`

const Spaced = styled.div`
    display: flex;
    flex-direction: column;
    gap: 15px;
    padding: 15px 0 11px;
`

const MotionBody = styled.div`
    display: flex;
    flex-direction: column;
    gap: 9px;
    padding: 5px 1px 2px 2px;
`

const MotionRow = styled.div`
    display: grid;
    grid-template-columns: auto 1fr auto;
    align-items: center;
    padding-left: 4px;

    ${IconButton} {
        margin-left: 4px;
    }
`
